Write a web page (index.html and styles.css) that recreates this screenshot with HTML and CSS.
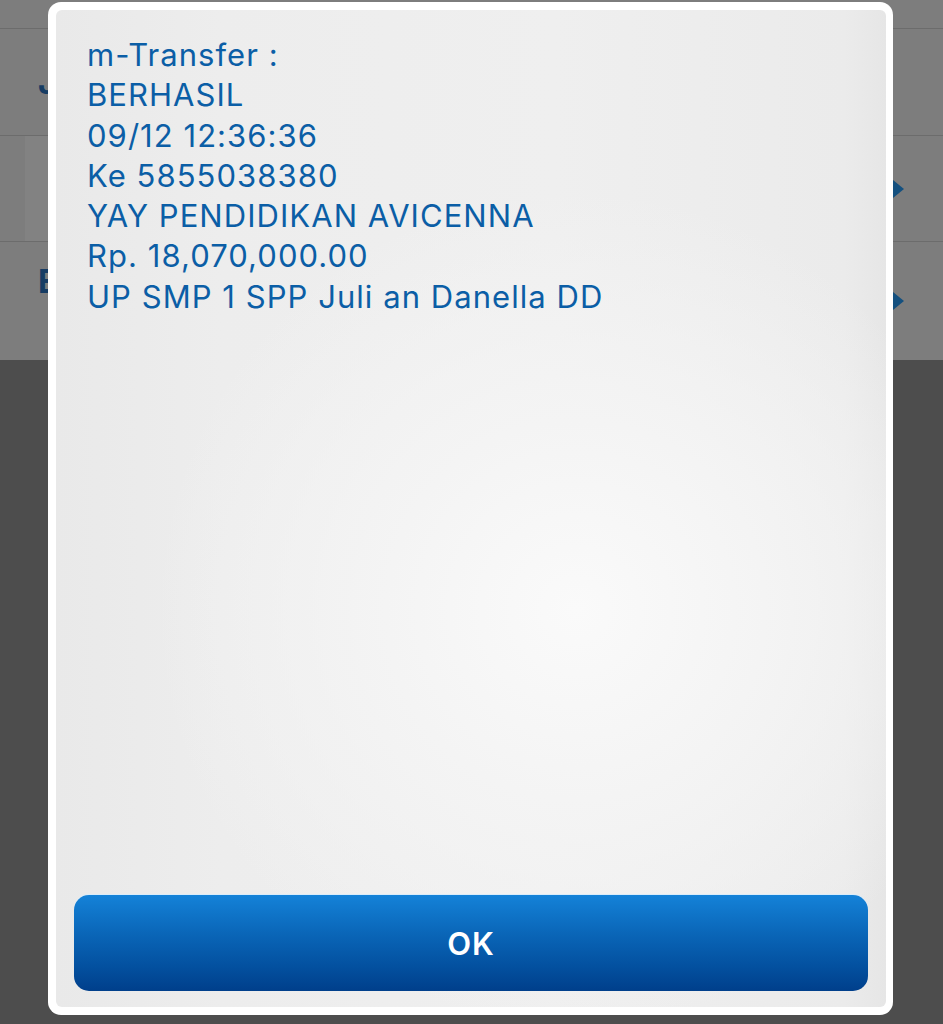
FILE: index.html
```html
<!DOCTYPE html>
<html>
<head>
<meta charset="utf-8">
<link rel="stylesheet" href="styles.css">
</head>
<body>
<div class="screen">
  <div class="back">
    <div class="topbar"></div>
    <div class="row row-j"><span class="letter">J</span></div>
    <div class="row row-card"><div class="card"></div><span class="arrow"></span></div>
    <div class="row row-e"><span class="letter">E</span><span class="arrow"></span></div>
  </div>
  <div class="dim"></div>
  <div class="dialog">
    <div class="panel">
      <div class="message">
        <div>m-Transfer :</div>
        <div>BERHASIL</div>
        <div>09/12 12:36:36</div>
        <div>Ke 5855038380</div>
        <div>YAY PENDIDIKAN AVICENNA</div>
        <div>Rp. 18,070,000.00</div>
        <div>UP SMP 1 SPP Juli an Danella DD</div>
      </div>
      <button class="ok">OK</button>
    </div>
  </div>
</div>
</body>
</html>
```

FILE: styles.css
```css
html, body {
  margin: 0;
  padding: 0;
}
body {
  width: 943px;
  height: 1024px;
  overflow: hidden;
  background: #4e4e4e;
  font-family: Inter, "Liberation Sans", Arial, sans-serif;
}
.screen {
  position: relative;
  width: 943px;
  height: 1024px;
  display: flex;
  flex-direction: column;
}
.back {
  background: #7d7d7d;
  height: 360px;
  display: flex;
  flex-direction: column;
}
.topbar {
  height: 28px;
  border-bottom: 1px solid #6c6c6c;
}
.row {
  position: relative;
  display: flex;
  align-items: center;
  border-bottom: 1px solid #6c6c6c;
}
.row-j {
  height: 106px;
  padding-left: 38px;
}
.row-card {
  height: 105px;
}
.card {
  margin-left: 25px;
  width: 100px;
  height: 100%;
  background: #828282;
}
.row-e {
  height: 118px;
  padding-left: 38px;
  border-bottom: none;
  align-items: flex-start;
}
.row-e .letter {
  margin-top: 20px;
}
.letter {
  color: #163c63;
  font-size: 32px;
  font-weight: bold;
}
.arrow {
  position: absolute;
  left: 893px;
  width: 0;
  height: 0;
  border-top: 9px solid transparent;
  border-bottom: 9px solid transparent;
  border-left: 11px solid #14507f;
}
.row-card .arrow { top: 44px; }
.row-e .arrow { top: 50px; }
.dim {
  flex: 1;
  background: #4d4d4d;
}
.dialog {
  position: absolute;
  left: 48px;
  top: 2px;
  width: 845px;
  height: 1013px;
  box-sizing: border-box;
  padding: 8px 7px 8px 8px;
  background: #ffffff;
  border-radius: 13px;
  display: flex;
}
.panel {
  flex: 1;
  border-radius: 6px;
  background:
    radial-gradient(ellipse 420px 420px at 520px 600px, #fafafa 0%, #f4f4f4 45%, rgba(234,234,234,0) 100%),
    linear-gradient(90deg, #e9e9e9 0%, #ededed 20%, #efefef 60%, #ebebeb 95%, #e6e6e6 100%);
  display: flex;
  flex-direction: column;
  padding: 25px 18px 16px 18px;
}
.message {
  flex: 1;
  padding-left: 13px;
  color: #0b5ea6;
  font-size: 31px;
  letter-spacing: 1.05px;
  line-height: 40.3px;
}
.ok {
  height: 96px;
  border: none;
  border-radius: 15px;
  background: linear-gradient(180deg, #1482d8 0%, #0a66b8 40%, #03509f 75%, #003f8b 100%);
  color: #ffffff;
  font-family: Inter, "Liberation Sans", Arial, sans-serif;
  font-size: 31px;
  letter-spacing: 1px;
  font-weight: 600;
  box-shadow: 0 -1px 0 #d9ecfa;
}
```
